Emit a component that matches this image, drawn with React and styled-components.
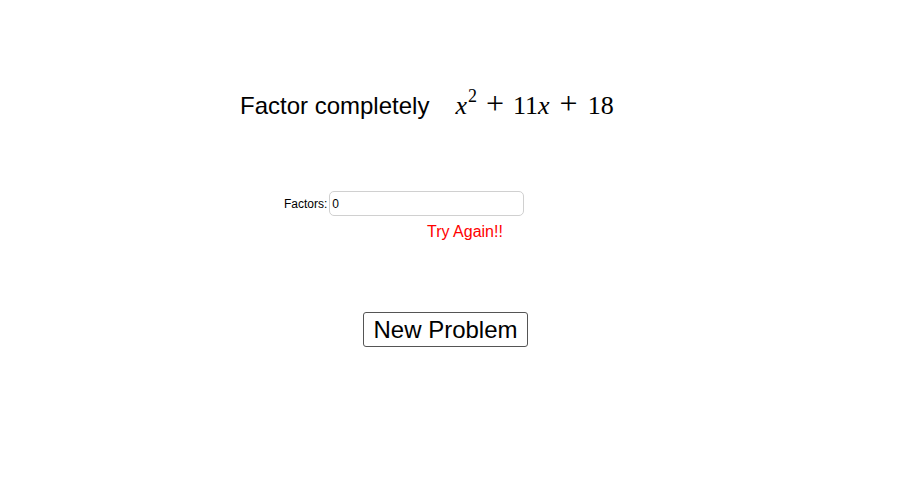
import React from 'react';
import styled, { createGlobalStyle } from 'styled-components';

const GlobalStyle = createGlobalStyle`
  body {
    margin: 0;
    background: #fff;
    font-family: "Liberation Sans", Arial, sans-serif;
    color: #000;
  }
`;

const Stage = styled.div`
  width: 908px;
  height: 503px;
  padding-top: 92px;
  box-sizing: border-box;
  overflow: hidden;
`;

const Prompt = styled.div`
  display: flex;
  align-items: baseline;
  padding-left: 240px;
  height: 28px;
`;

const PromptText = styled.span`
  font-size: 24px;
  line-height: 28px;
`;

const MathExpr = styled.span`
  margin-left: 26px;
  font-family: "Liberation Serif", "DejaVu Serif", serif;
  font-size: 26px;
  line-height: 28px;
  white-space: nowrap;
`;

const Var = styled.i`
  font-style: italic;
`;

const Sup = styled.sup`
  font-size: 18px;
  vertical-align: 12px;
  line-height: 0;
  margin-left: 1px;
`;

const Op = styled.span`
  padding: 0 ${p => p.$space}px;
  font-size: 32px;
  line-height: 0;
`;

const AnswerRow = styled.div`
  display: flex;
  align-items: center;
  margin-top: 71px;
  padding-left: 284px;
`;

const FieldLabel = styled.label`
  font-size: 12px;
  margin-right: 2px;
`;

const Field = styled.input`
  width: 195px;
  height: 25px;
  box-sizing: border-box;
  border: 1px solid #d0d0d0;
  border-radius: 5px;
  padding: 0 2px;
  font-family: "Liberation Sans", Arial, sans-serif;
  font-size: 12px;
  color: #000;
  outline: none;
`;

const Feedback = styled.div`
  margin-top: 7px;
  padding-left: 427px;
  font-size: 16px;
  line-height: 18px;
  color: ${p => p.color};
`;

const ButtonRow = styled.div`
  margin-top: 71px;
  padding-left: 363px;
`;

const NewButton = styled.button`
  width: 165px;
  height: 35px;
  box-sizing: border-box;
  background: #fff;
  border: 1px solid #555;
  border-radius: 3px;
  font-family: "Liberation Sans", Arial, sans-serif;
  font-size: 24px;
  color: #000;
  padding: 0;
  cursor: pointer;
`;

export default function App() {
  const [answer, setAnswer] = React.useState('0');
  return (
    <Stage>
      <GlobalStyle />
      <Prompt>
        <PromptText>Factor completely</PromptText>
        <MathExpr>
          <Var>x</Var><Sup>2</Sup><Op $space={9}>+</Op>11<Var>x</Var><Op $space={10}>+</Op>18
        </MathExpr>
      </Prompt>
      <AnswerRow>
        <FieldLabel htmlFor="factors">Factors:</FieldLabel>
        <Field id="factors" value={answer} onChange={e => setAnswer(e.target.value)} />
      </AnswerRow>
      <Feedback color="#ff0000">Try Again!!</Feedback>
      <ButtonRow>
        <NewButton>New Problem</NewButton>
      </ButtonRow>
    </Stage>
  );
}
